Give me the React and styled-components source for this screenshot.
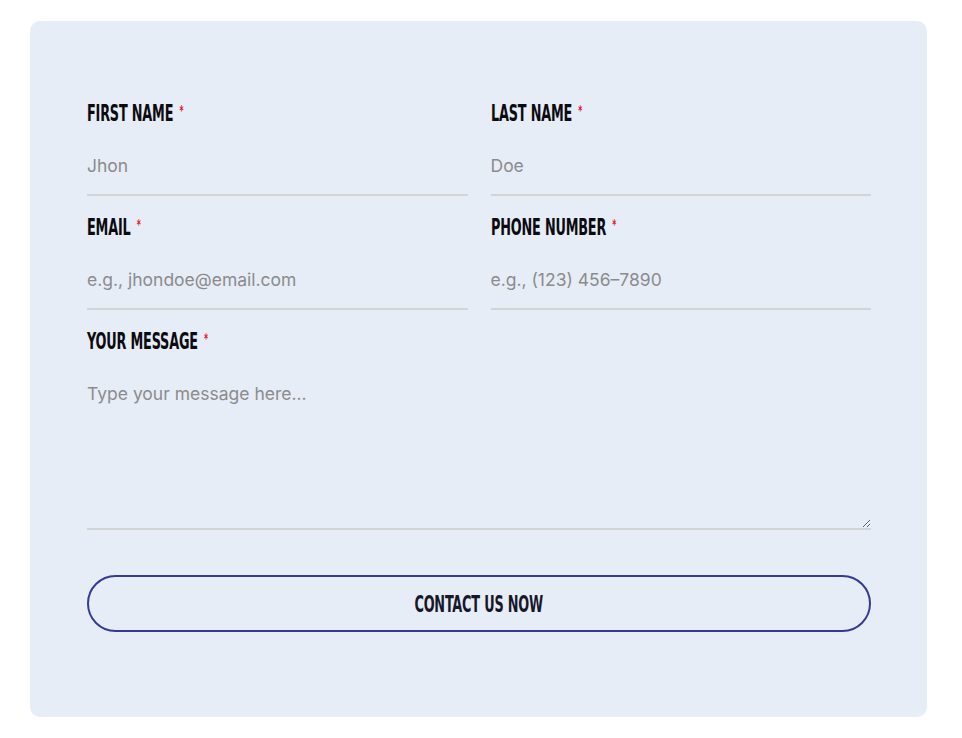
import React from 'react'
import styled, { createGlobalStyle } from 'styled-components'

const GlobalStyle = createGlobalStyle`
  html, body {
    margin: 0;
    padding: 0;
    background: #ffffff;
  }
  body {
    font-family: Inter, "Noto Sans", sans-serif;
  }
  * { box-sizing: border-box; }
`;

const Page = styled.div`
  padding: 21px 35px 22px 30px;
`;

const Card = styled.form`
  background: #e7edf6;
  border-radius: 10px;
  padding: 80px 56px 85px 57px;
  display: flex;
  flex-direction: column;
`;

const Row = styled.div`
  display: grid;
  grid-template-columns: 1fr 1fr;
  column-gap: 23px;
`;

const Field = styled.div`
  display: flex;
  flex-direction: column;
  margin-bottom: ${props => props.last ? "45px" : "19px"};
`;

const Label = styled.label`
  height: 24px;
  margin-bottom: 12px;
  display: flex;
  align-items: center;
  white-space: nowrap;
`;

// condensed display face: squeeze the bold condensed font horizontally
const LabelText = styled.span`
  display: inline-block;
  font-family: "DejaVu Sans Condensed", "DejaVu Sans", sans-serif;
  font-stretch: condensed;
  font-weight: 700;
  font-size: 23px;
  line-height: 24px;
  color: #0b0b10;
  letter-spacing: -0.3px;
  transform: scaleX(0.62);
  transform-origin: left center;
`;

const Star = styled.span`
  color: #e0101e;
  font-size: 14px;
  vertical-align: top;
  position: relative;
  top: -3px;
  margin-left: 10px;
`;

const Input = styled.input`
  height: 59px;
  border: none;
  border-bottom: 2px solid #d3d4d8;
  background: transparent;
  padding: 0;
  font-family: Inter, "Noto Sans", sans-serif;
  font-size: 17.5px;
  color: #333;
  outline: none;
  &::placeholder {
    color: #8b8b8e;
  }
`;

const TextArea = styled.textarea`
  height: 165px;
  border: none;
  border-bottom: 2px solid #d3d4d8;
  background: transparent;
  padding: 17px 0 0 0;
  font-family: Inter, "Noto Sans", sans-serif;
  font-size: 17.5px;
  line-height: 24px;
  color: #333;
  outline: none;
  resize: vertical;
  &::placeholder {
    color: #8b8b8e;
  }
`;

const Button = styled.button`
  height: 57px;
  border: 2px solid #353a96;
  border-radius: 30px;
  background: transparent;
  display: flex;
  align-items: center;
  justify-content: center;
  cursor: pointer;
`;

const ButtonText = styled.span`
  display: inline-block;
  font-family: "DejaVu Sans Condensed", "DejaVu Sans", sans-serif;
  font-stretch: condensed;
  font-weight: 700;
  font-size: 23px;
  color: #16172b;
  letter-spacing: -0.3px;
  transform: scaleX(0.62);
`;

const fields = [
  [
    { label: "FIRST NAME", placeholder: "Jhon", type: "text" },
    { label: "LAST NAME", placeholder: "Doe", type: "text" },
  ],
  [
    { label: "EMAIL", placeholder: "e.g., jhondoe@email.com", type: "email" },
    { label: "PHONE NUMBER", placeholder: "e.g., (123) 456–7890", type: "tel" },
  ],
];

const FieldLabel = ({ text }) => (
  <Label>
    <LabelText>
      {text}
      <Star>*</Star>
    </LabelText>
  </Label>
);

export default function App() {
  return (
    <>
      <GlobalStyle />
      <Page>
        <Card onSubmit={e => e.preventDefault()}>
          {fields.map((row, i) => (
            <Row key={i}>
              {row.map(f => (
                <Field key={f.label}>
                  <FieldLabel text={f.label} />
                  <Input type={f.type} placeholder={f.placeholder} />
                </Field>
              ))}
            </Row>
          ))}
          <Field last>
            <FieldLabel text="YOUR MESSAGE" />
            <TextArea placeholder="Type your message here..." />
          </Field>
          <Button type="submit">
            <ButtonText>CONTACT US NOW</ButtonText>
          </Button>
        </Card>
      </Page>
    </>
  );
}
